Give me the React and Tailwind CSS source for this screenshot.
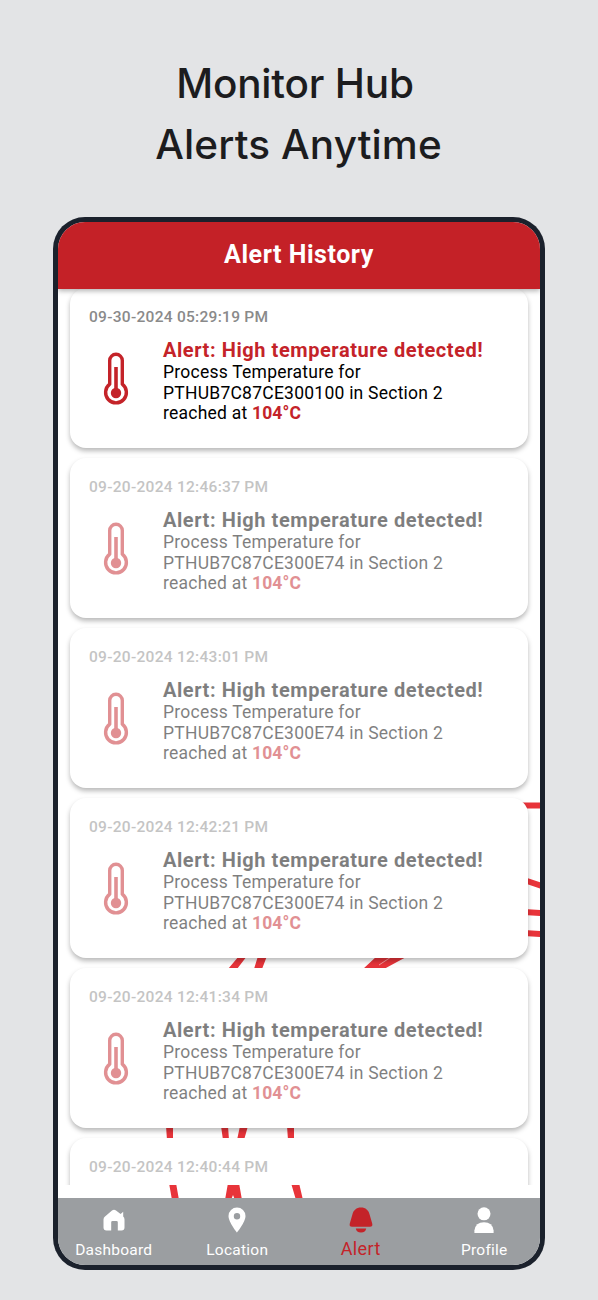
const alerts = [
  { id: 1, fecha: '09-30-2024 05:29:19 PM', hub: 'PTHUB7C87CE300100', leida: false },
  { id: 2, fecha: '09-20-2024 12:46:37 PM', hub: 'PTHUB7C87CE300E74', leida: true },
  { id: 3, fecha: '09-20-2024 12:43:01 PM', hub: 'PTHUB7C87CE300E74', leida: true },
  { id: 4, fecha: '09-20-2024 12:42:21 PM', hub: 'PTHUB7C87CE300E74', leida: true },
  { id: 5, fecha: '09-20-2024 12:41:34 PM', hub: 'PTHUB7C87CE300E74', leida: true },
  // only the top of this one fits above the tabs
  { id: 6, fecha: '09-20-2024 12:40:44 PM', leida: true },
];

function ThermometerIcon() {
  return (
    <svg width="26" height="54" viewBox="0 0 26 54" fill="none" stroke="#c42329">
      <path d="M6.7 32.2V8.6a6.3 6.3 0 0 1 12.6 0v23.6a10.4 10.4 0 1 1-12.6 0Z" strokeWidth="3.4" strokeLinejoin="round" />
      <path d="M13 15v26" strokeWidth="3.6" />
      <circle cx="13" cy="41" r="5.2" fill="#c42329" stroke="none" />
    </svg>
  );
}

function HomeIcon() {
  return (
    <svg width="22" height="22" viewBox="0 0 22 22" fill="#fff">
      <path d="M2 7.5 9 1.5q2-1.4 4 0l4.6 3.5 2.6-2.2v4.6q1.3 1.2 1.3 3v8.1q0 3-3 3h-3.700v-8.200q0-1.300-1.300-1.300h-4q-1.300 0-1.300 1.300v8.200H3.500q-3 0-3-3v-8q0-1.800 1.500-3Z" />
    </svg>
  );
}

function PinIcon() {
  return (
    <svg width="18" height="26" viewBox="0 0 18 26" fill="#fff">
      <path fillRule="evenodd" d="M9 .5a8.5 8.5 0 0 0-8.5 8.5C.5 15.3 9 25.5 9 25.5S17.5 15.3 17.5 9A8.5 8.5 0 0 0 9 .5Zm0 5.6a3.2 3.2 0 1 1 0 6.4 3.2 3.2 0 0 1 0-6.4Z" />
    </svg>
  );
}

function BellIcon() {
  return (
    <svg width="24" height="26" viewBox="0 0 24 26" fill="#c42329">
      <path d="M12 .5c4.6 0 7.6 2.7 8.6 7l2.6 9c.6 2.3-.3 3.3-2.2 3.3H3c-1.9 0-2.8-1-2.200-3.300l2.600-9c1-4.300 4-7 8.600-7Z" />
      <path d="M6.800 21.600h10.400q-.6 4-5.200 4t-5.200-4Z" />
    </svg>
  );
}

function UserIcon() {
  return (
    <svg width="20" height="26" viewBox="0 0 20 26" fill="#fff">
      <circle cx="10" cy="6.8" r="6.5" />
      <path d="M.4 26v-2.5Q1.5 15.3 10 15.3t9.6 8.2V26Z" />
    </svg>
  );
}

// line art that stays behind the list and shows between the cards
function BackgroundLines() {
  return (
    <svg className="absolute inset-0" width="482" height="910" viewBox="58 288 482 910" fill="#e8343a">
      <path d="M522 805.5h20M524 880l18 6M524 912l18 1M524 933l18 1" fill="none" stroke="#e8343a" strokeWidth="6" />
      <path d="M239 956h8l-10 13h-9ZM258 956h9l-5 13h-8ZM377 956h31l-24 13h-21Z" />
      <path d="M391 957l-12 8" stroke="#fff" strokeOpacity="0.5" strokeWidth="1" />
      <path d="M166 1126h7v14h-6ZM221 1126h7l1 14h-6ZM240 1126h8l-4 14h-7ZM287 1126h7v14h-6Z" />
      <path d="M169 1183h7l3 17h-7ZM228 1183h11l3 17h-7l-2-5-2 5h-6ZM291 1183h8l4 17h-7Z" />
    </svg>
  );
}

const tabs = [
  { label: 'Dashboard', icon: HomeIcon },
  { label: 'Location', icon: PinIcon },
  { label: 'Alert', icon: BellIcon, active: true },
  { label: 'Profile', icon: UserIcon },
];

function AlertCard({ alerta }) {
  return (
    <div className="h-[159.5px] shrink-0 rounded-[16px] bg-white pl-[19px] pt-[19px] shadow-[0_3px_5px_rgba(0,0,0,0.28)]">
      <div className={alerta.leida ? 'opacity-50' : ''}>
        <p className="text-[15.5px] leading-5 font-medium tracking-[0.28px] text-[#8a8a8a]">{alerta.fecha}</p>
        {alerta.hub && (
          <div className="flex mt-[11px]">
            <div className="w-[74px] shrink-0 pl-[14px] pt-[13.5px]">
              <ThermometerIcon />
            </div>
            <div className="whitespace-nowrap">
              <h2 className={'text-[20px] leading-6 font-bold tracking-[0.57px] ' + (alerta.leida ? 'text-black' : 'text-[#c42329]')}>
                Alert: High temperature detected!
              </h2>
              <p className="text-[17.5px] leading-[20.6px] tracking-[0.24px] text-black">
                Process Temperature for<br />
                {alerta.hub} in Section 2<br />
                reached at <span className="font-bold tracking-[0.1px] text-[#c42329]">104°C</span>
              </p>
            </div>
          </div>
        )}
      </div>
    </div>
  );
}

export default function App() {
  return (
    <div className="w-[598px] h-[1300px] overflow-hidden bg-[#e3e4e6] font-['Roboto',sans-serif]">
      <h1 className="h-[217px] pt-[53px] text-center font-['Inter',sans-serif] text-[40.5px] leading-[61px] font-medium text-[#1c1c1e]">
        <span className="block pr-[8px] tracking-[-0.2px]">Monitor Hub</span>
        <span className="block pr-px tracking-[0.1px]">Alerts Anytime</span>
      </h1>

      <div className="ml-[53px] w-[492px] h-[1053px] rounded-[32px] bg-[#1b212c] p-[5px]">
        <div className="flex h-full flex-col overflow-hidden rounded-[27px] bg-white">
          {/* Header */}
          <div className="relative z-10 flex h-[67px] shrink-0 items-center justify-center bg-[#c42127] pb-[2px] shadow-[0_2px_5px_rgba(0,0,0,0.3)]">
            <span className="text-[25px] leading-8 font-bold tracking-[0.55px] text-white">Alert History</span>
          </div>

          {/* Lista */}
          <div className="relative -mt-px min-h-0 flex-1">
            <BackgroundLines />
            <div className="relative flex h-[897px] flex-col gap-[10.5px] overflow-hidden px-3">
              {alerts.map((a) => (
                <AlertCard key={a.id} alerta={a} />
              ))}
            </div>
          </div>

          {/* Tabs */}
          <div className="relative flex h-[67px] shrink-0 justify-center bg-[#9b9ea1]">
            {tabs.map((t) => (
              <div key={t.label} className="flex w-[123.5px] shrink-0 flex-col items-center">
                <div className="flex h-[43px] items-center">
                  <t.icon />
                </div>
                <span className={t.active ? '-mt-[2px] text-[18px] leading-5 tracking-[0.4px] text-[#c42329]' : '-mt-px text-[15.5px] leading-5 tracking-[0.25px] text-white'}>
                  {t.label}
                </span>
              </div>
            ))}
          </div>
        </div>
      </div>
    </div>
  );
}
